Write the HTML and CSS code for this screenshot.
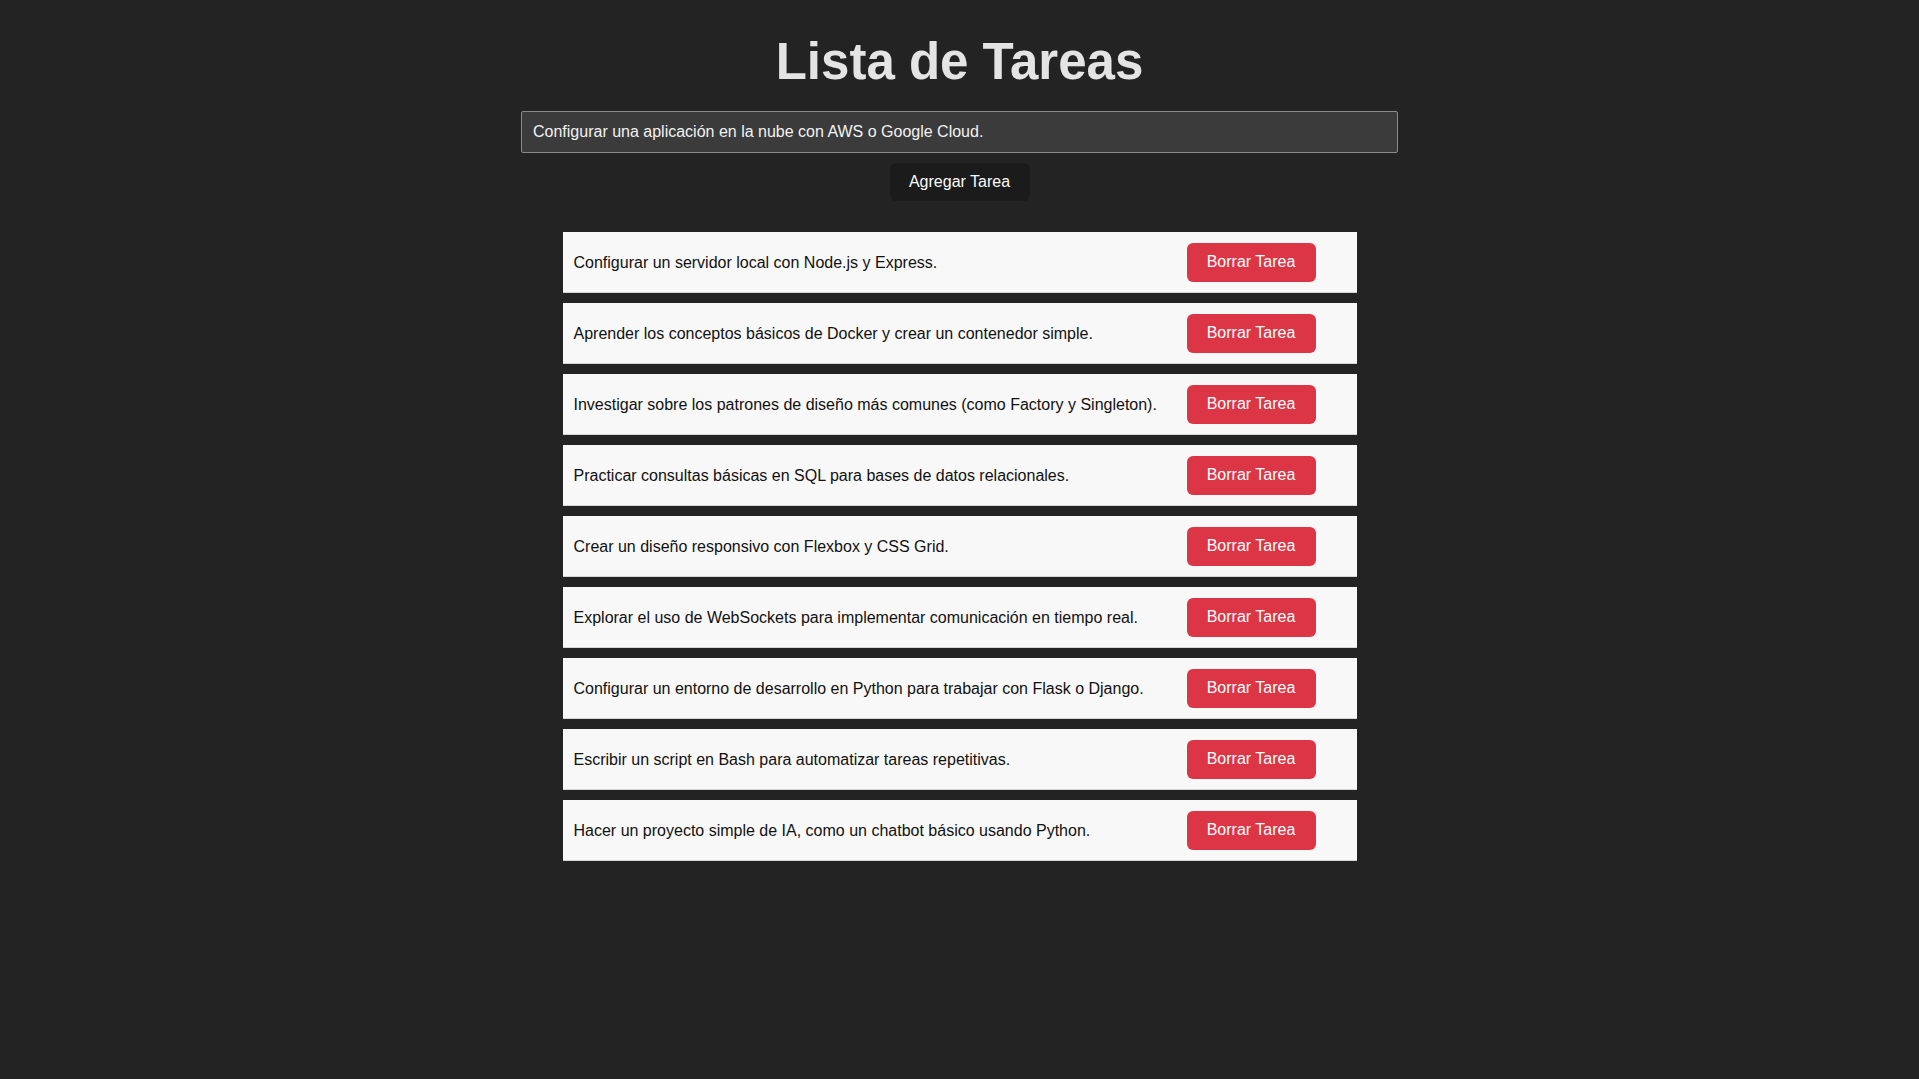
FILE: index.html
```html
<!DOCTYPE html>
<html lang="es">
<head>
<meta charset="utf-8">
<title>Lista de Tareas</title>
<link rel="stylesheet" href="styles.css">
</head>
<body>
<main class="app">
  <h1 class="title">Lista de Tareas</h1>
  <input class="task-input" type="text" value="Configurar una aplicación en la nube con AWS o Google Cloud.">
  <button class="add-btn" type="button">Agregar Tarea</button>
  <ul class="task-list">
    <li class="task"><span class="task-text">Configurar un servidor local con Node.js y Express.</span><button class="del-btn" type="button">Borrar Tarea</button></li>
    <li class="task"><span class="task-text">Aprender los conceptos básicos de Docker y crear un contenedor simple.</span><button class="del-btn" type="button">Borrar Tarea</button></li>
    <li class="task"><span class="task-text">Investigar sobre los patrones de diseño más comunes (como Factory y Singleton).</span><button class="del-btn" type="button">Borrar Tarea</button></li>
    <li class="task"><span class="task-text">Practicar consultas básicas en SQL para bases de datos relacionales.</span><button class="del-btn" type="button">Borrar Tarea</button></li>
    <li class="task"><span class="task-text">Crear un diseño responsivo con Flexbox y CSS Grid.</span><button class="del-btn" type="button">Borrar Tarea</button></li>
    <li class="task"><span class="task-text">Explorar el uso de WebSockets para implementar comunicación en tiempo real.</span><button class="del-btn" type="button">Borrar Tarea</button></li>
    <li class="task"><span class="task-text">Configurar un entorno de desarrollo en Python para trabajar con Flask o Django.</span><button class="del-btn" type="button">Borrar Tarea</button></li>
    <li class="task"><span class="task-text">Escribir un script en Bash para automatizar tareas repetitivas.</span><button class="del-btn" type="button">Borrar Tarea</button></li>
    <li class="task"><span class="task-text">Hacer un proyecto simple de IA, como un chatbot básico usando Python.</span><button class="del-btn" type="button">Borrar Tarea</button></li>
  </ul>
</main>
</body>
</html>
```
FILE: styles.css
```css
html, body {
  margin: 0;
  padding: 0;
  background: #232323;
}
body {
  font-family: "Liberation Sans", Arial, sans-serif;
  font-size: 16px;
  color: #111;
}
.app {
  display: flex;
  flex-direction: column;
  align-items: center;
  padding-top: 33px;
}
.title {
  margin: 0;
  font-size: 51px;
  font-weight: bold;
  color: #e4e4e4;
  line-height: 57px;
}
.task-input {
  box-sizing: border-box;
  margin-top: 21px;
  width: 877px;
  height: 42px;
  padding: 0 11px;
  background: #3b3b3b;
  border: 1px solid #8a8a8a;
  border-radius: 2px;
  color: #f2f2f2;
  font-family: "Liberation Sans", Arial, sans-serif;
  font-size: 16px;
  outline: none;
}
.add-btn {
  box-sizing: border-box;
  margin-top: 10px;
  width: 140px;
  height: 38px;
  padding: 0;
  border: none;
  border-radius: 6px;
  background: #1b1b1b;
  color: #fafafa;
  font-family: "Liberation Sans", Arial, sans-serif;
  font-size: 16px;
}
.task-list {
  list-style: none;
  margin: 31px 0 0;
  padding: 0;
  width: 794px;
  display: flex;
  flex-direction: column;
  gap: 10px;
}
.task {
  box-sizing: border-box;
  height: 61px;
  display: flex;
  align-items: center;
  justify-content: space-between;
  padding: 0 41px 0 11px;
  background: #f8f8f8;
  border-bottom: 1px solid #d6d6d6;
}
.task-text {
  padding-top: 2px;
  font-size: 16px;
  color: #111;
}
.del-btn {
  box-sizing: border-box;
  flex: none;
  width: 129px;
  height: 39px;
  padding: 0;
  border: none;
  border-radius: 6px;
  background: #dc3545;
  color: #fff;
  font-family: "Liberation Sans", Arial, sans-serif;
  font-size: 16px;
}
```
